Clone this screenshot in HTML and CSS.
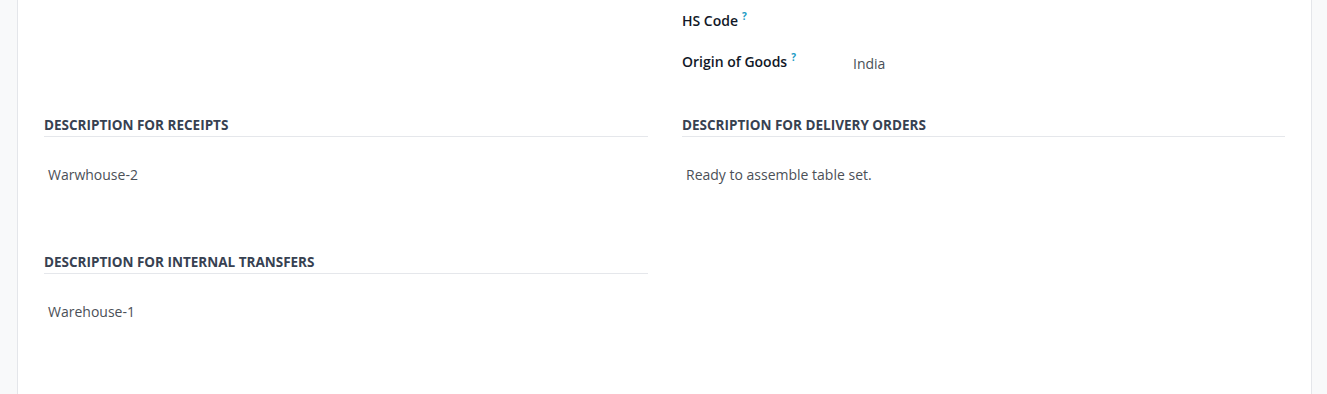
FILE: index.html
```html
<!DOCTYPE html>
<html lang="en">
<head>
<meta charset="UTF-8">
<meta name="viewport" content="width=device-width, initial-scale=1.0">
<title>Product - Inventory</title>
<link rel="stylesheet" href="styles.css">
</head>
<body>
<div class="sheet">
  <div class="group">
    <div class="col"></div>
    <div class="col">
      <div class="field">
        <label class="field-label">HS Code<sup class="tip">?</sup></label>
        <span class="field-value"></span>
      </div>
      <div class="field">
        <label class="field-label">Origin of Goods<sup class="tip">?</sup></label>
        <span class="field-value">India</span>
      </div>
    </div>
  </div>

  <div class="group">
    <div class="col">
      <div class="desc">
        <div class="desc-title">Description for Receipts</div>
        <div class="desc-text">Warwhouse-2</div>
      </div>
      <div class="desc">
        <div class="desc-title">Description for Internal Transfers</div>
        <div class="desc-text">Warehouse-1</div>
      </div>
    </div>
    <div class="col">
      <div class="desc">
        <div class="desc-title">Description for Delivery Orders</div>
        <div class="desc-text">Ready to assemble table set.</div>
      </div>
    </div>
  </div>
</div>
</body>
</html>
```

FILE: styles.css
```css
/* styles.css */
body {
  margin: 0;
  height: 394px;
  overflow: hidden;
  background-color: #f8f9fa;
  color: #212529;
  font-family: 'Open Sans', 'Noto Sans', sans-serif;
  font-size: 14px;
  padding: 0 15px 0 17px;
}

.sheet {
  height: 394px;
  background-color: #fff;
  border-left: 1px solid #e4e6ea;
  border-right: 1px solid #e4e6ea;
  padding: 0 25px 0 26px;
}

.group {
  display: grid;
  grid-template-columns: 604px 603px;
  column-gap: 34px;
}

.group:first-child {
  height: 116px;
  padding-top: 10px;
  box-sizing: border-box;
}

.field {
  display: flex;
  align-items: baseline;
  height: 41px;
  line-height: 21px;
}

.field-label {
  width: 171px;
  font-weight: 600;
  color: #111827;
}

.tip {
  color: #1a9bc4;
  font-size: 10px;
  font-weight: 700;
  margin-left: 4px;
  vertical-align: 6px;
  line-height: 0;
}

.field-value {
  color: #495057;
  position: relative;
  top: 2px;
}

.desc {
  height: 137px;
}

.desc-title {
  font-size: 13.5px;
  font-weight: 700;
  text-transform: uppercase;
  color: #374151;
  line-height: 19px;
  padding-bottom: 1px;
  border-bottom: 1px solid #e5e7eb;
}

.desc-text {
  padding: 27px 4px 0;
  line-height: 21px;
  color: #4b5057;
}
```
